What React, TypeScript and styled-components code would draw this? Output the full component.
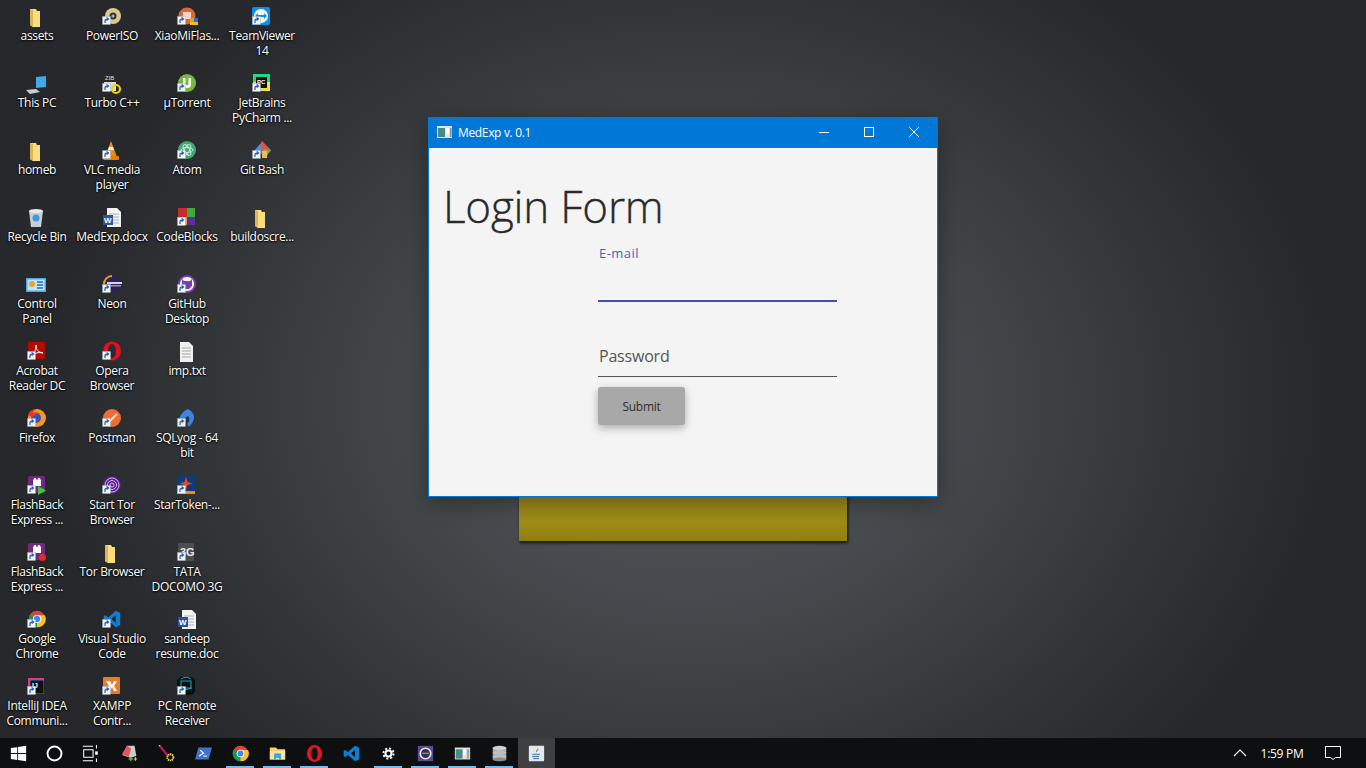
import React from "react";
import styled, { createGlobalStyle } from "styled-components";

const Global = createGlobalStyle`
  html, body { margin: 0; padding: 0; width: 1366px; height: 768px; overflow: hidden; background: #222; }
  * { box-sizing: border-box; }
`;

const FONT = `"Open Sans", "Noto Sans", sans-serif`;

const Screen = styled.div`
  width: 1366px; height: 768px; display: flex; flex-direction: column; overflow: hidden;
  font-family: ${FONT};
`;
const Desktop = styled.main`
  position: relative; flex: 1; min-height: 0; overflow: hidden;
  background: radial-gradient(ellipse 640px 520px at 690px 400px, #515659 0%, #484c50 35%, #36393c 70%, #26282c 100%), #222327;
`;
const IconGrid = styled.div`
  display: grid; grid-auto-flow: column; grid-template-rows: repeat(11, 67px); grid-auto-columns: 75px;
  margin-left: -0.5px;
`;
const Cell = styled.div`
  display: flex; flex-direction: column; align-items: center; padding-top: 6px; height: 67px;
`;
const IconBox = styled.div`
  position: relative; width: 26px; height: 22px; flex: none; margin-right: 2px;
  svg { display: block; width: 26px; height: 24px; }
`;
const Shortcut = styled.span`
  position: absolute; left: 4px; bottom: 3px; width: 9px; height: 9px; display: block;
  svg { width: 9px; height: 9px; }
`;
const Label = styled.div`
  width: 74px; color: #fff; font-size: 12px; line-height: 15px; text-align: center; letter-spacing: -0.32px;
  text-shadow: 0 1px 2px #000, 0 0 2px #000; white-space: pre-line;
`;
const BackWindow = styled.div`
  position: absolute; left: 519px; top: 420px; width: 328px; height: 121px;
  background: linear-gradient(180deg, #8f7f1b, #a08d17 85%, #8f7d10); box-shadow: 1px 2px 3px rgba(0,0,0,.75);
`;
const Win = styled.section`
  position: absolute; left: 428px; top: 117px; width: 510px; height: 380px; background: #f4f4f4;
  border: 1px solid #0078d7; display: flex; flex-direction: column;
  box-shadow: 0 6px 22px rgba(0,0,0,.35);
`;
const TitleBar = styled.header`
  height: 30px; flex: none; background: #0078d7; display: flex; align-items: center; color: #fff;
  padding: 0 1px 2px 8px;
`;
const TitleIcon = styled.svg` width: 15px; height: 12px; margin-right: 6px; flex: none; `;
const TitleText = styled.span` font-size: 12px; letter-spacing: -0.34px; flex: 1; `;
const Ctrl = styled.button`
  width: 45px; height: 28px; background: none; border: 0; padding: 0; display: flex; align-items: center; justify-content: center;
  svg { width: 10px; height: 10px; display: block; }
`;
const Content = styled.div`
  flex: 1; padding: 30px 14px 0; display: flex; flex-direction: column; color: #333;
`;
const Heading = styled.h1`
  margin: 0; font-size: 44px; line-height: 56px; font-weight: 300; letter-spacing: -0.2px; color: #2a2a2a;
  -webkit-text-stroke: 0.35px #2a2a2a;
`;
const Form = styled.form`
  margin: 8px 0 0 155px; width: 239px; display: flex; flex-direction: column;
`;
const Field = styled.div<{ $focused?: boolean; $h: number }>`
  height: ${p => p.$h}px; border-bottom: ${p => (p.$focused ? "2px solid #3f51b5" : "1px solid #555")};
`;
const FloatLabel = styled.div`
  padding-left: 1px; padding-top: 2px; font-size: 13px; line-height: 18px; color: #4a62b4; letter-spacing: 0.45px;
`;
const Placeholder = styled.div`
  padding-left: 1px; padding-top: 43px; font-size: 16px; line-height: 22px; color: #555; letter-spacing: -0.2px;
`;
const Submit = styled.button`
  margin-top: 10px; width: 87px; height: 38px; border: 0; border-radius: 3px; background: #a8a8a8; color: #2e2e2e;
  font: 12px ${FONT}; letter-spacing: -0.25px; box-shadow: 0 3px 8px rgba(0,0,0,.3); padding: 0;
`;
const Taskbar = styled.footer`
  height: 30px; flex: none; background: #0e0f10; display: flex; align-items: stretch;
`;
const Slot = styled.div<{ $open?: boolean; $active?: boolean; $w?: number; $pr?: number }>`
  position: relative; width: ${p => p.$w ?? 37}px; height: 30px; display: flex; align-items: center; justify-content: center;
  padding-right: ${p => p.$pr ?? 1}px;
  background: ${p => (p.$active ? "#3e4041" : "transparent")};
  svg { width: 17px; height: 17px; display: block; }
  &::after {
    content: ""; position: absolute; left: 4px; right: 5px; bottom: 0; height: 2px;
    background: ${p => (p.$open ? "#76b9ed" : "transparent")};
  }
`;
const Tray = styled.div`
  margin-left: auto; display: flex; align-items: center; color: #fff; padding-right: 13px;
`;
const TrayBtn = styled.div<{ $w: number }>`
  width: ${p => p.$w}px; height: 30px; display: flex; align-items: center; justify-content: center;
`;
const Clock = styled.span` width: 60px; text-align: center; font-size: 12px; letter-spacing: -0.3px; `;

const chromeShape = <><circle cx="12" cy="12" r="11" fill="#db4437"/><path d="M12 12L2.500 6.500A11 11 0 0 0 12 23z" fill="#0f9d58"/><path d="M12 12v11A11 11 0 0 0 22.500 7H12z" fill="#fbc02d"/><circle cx="12" cy="12" r="5.400" fill="#fff"/><circle cx="12" cy="12" r="4.200" fill="#4285f4"/></>;
const vsShape = <path d="M17 1l6 3v16l-6 3-10-9-4 3-2-1V8l2-1 4 3zM17 7l-6 5 6 5z" fill="#0e7fd0"/>;
const DESK_BOX = "-6.67 -1.33 34.67 32";

const folder = <svg viewBox="0 0 26 24"><path d="M7 3h6l1 2h3v16H10l-3-2z" fill="#fbdc7f"/><path d="M7 3l3 1v17l-3-2z" fill="#d9b65a"/></svg>;
const I: Record<string, React.ReactNode> = {
  folder,
  iso: <svg viewBox="0 0 26 24"><circle cx="15" cy="10" r="8" fill="#d9c98e"/><circle cx="15" cy="10" r="3.500" fill="#333"/><circle cx="15" cy="10" r="1.500" fill="#bbb"/></svg>,
  xiaomi: <svg viewBox="0 0 26 24"><circle cx="14" cy="10" r="8.500" fill="#d9683c"/><rect x="10" y="6" width="8" height="7" fill="#f4d6c8"/><rect x="17" y="12" width="4" height="4" fill="#e8a020"/><rect x="21" y="12" width="4" height="4" fill="#2a6cc8"/><rect x="17" y="16" width="8" height="3" fill="#e8c020"/></svg>,
  tv: <svg viewBox="0 0 26 24"><rect x="4" y="1" width="18" height="18" rx="2" fill="#0e8ee9"/><circle cx="13" cy="10" r="7" fill="#fff"/><path d="M7 10l3-3v2h6V7l3 3-3 3v-2h-6v2z" fill="#0e8ee9"/></svg>,
  pc: <svg viewBox="0 0 26 24"><path d="M13 4l10-1v11l-10 1z" fill="#3fa9ea"/><path d="M3 17l10-1 4 3-10 2z" fill="#c8ccd0"/></svg>,
  turbo: <svg viewBox="0 0 26 24"><rect x="6" y="1" width="12" height="7" fill="#2a2a2a"/><text x="7" y="7" fontSize="6" fill="#ddd" fontFamily="Liberation Sans">ZIB</text><rect x="6" y="9" width="12" height="9" fill="#ddd"/><circle cx="18" cy="16" r="4" fill="none" stroke="#f0d400" strokeWidth="2.200"/></svg>,
  ut: <svg viewBox="0 0 26 24"><circle cx="14" cy="10" r="9" fill="#76b83f"/><path d="M10 5v7q0 3 4 3t4-3V5h-2.500v7h-3V5z" fill="#fff"/></svg>,
  charm: <svg viewBox="0 0 26 24"><rect x="5" y="1" width="17" height="17" fill="#21d789"/><rect x="5" y="9" width="17" height="9" fill="#f0e040"/><rect x="8" y="4" width="11" height="11" fill="#111"/><text x="9" y="10.500" fontSize="6" fontWeight="700" fill="#fff" fontFamily="Liberation Sans">PC</text></svg>,
  vlc: <svg viewBox="0 0 26 24"><path d="M13 1l6 16H7z" fill="#f08a10"/><path d="M11 7h4l1 3h-6z" fill="#fff"/><rect x="5" y="16" width="16" height="4" rx="1" fill="#e87a00"/></svg>,
  atom: <svg viewBox="0 0 26 24"><circle cx="14" cy="10" r="9" fill="#3fa873"/><g fill="none" stroke="#cdeedd" strokeWidth=".9"><ellipse cx="14" cy="10" rx="6" ry="2.500"/><ellipse cx="14" cy="10" rx="6" ry="2.500" transform="rotate(60 14 10)"/><ellipse cx="14" cy="10" rx="6" ry="2.500" transform="rotate(120 14 10)"/></g></svg>,
  git: <svg viewBox="0 0 26 24"><path d="M14 1l9 9-5 6-6-3-2-5z" fill="#d8584a"/><path d="M16 9l7 1-6 8-3-5z" fill="#7cb04a"/><path d="M12 4L5 12h10z" fill="#4a90d8"/><rect x="14" y="11" width="5" height="7" fill="#e8c050"/></svg>,
  bin: <svg viewBox="0 0 26 24"><path d="M6 4h14l-2 16H8z" fill="#c9ced2"/><ellipse cx="13" cy="4" rx="7" ry="2" fill="#e6e8ea"/><circle cx="13" cy="11" r="3.500" fill="#3f9adf"/></svg>,
  word: <svg viewBox="0 0 26 24"><path d="M9 1h10l4 4v15H9z" fill="#f3f3f3"/><path d="M11 7h10M11 10h10M11 13h10M11 16h10" stroke="#a8b4c8"/><rect x="5" y="8" width="10" height="10" fill="#2b579a"/><text x="6" y="16" fontSize="8" fontWeight="700" fill="#fff" fontFamily="Liberation Sans">W</text></svg>,
  cb: <svg viewBox="0 0 26 24"><rect x="5" y="1" width="9" height="9" fill="#c22e2e"/><rect x="14" y="1" width="8" height="9" fill="#3fa83f"/><rect x="14" y="10" width="8" height="8" fill="#5a2ea8"/><rect x="5" y="10" width="9" height="8" fill="#e8a020"/></svg>,
  panel: <svg viewBox="0 0 26 24"><rect x="3" y="4" width="20" height="14" fill="#4aa9e8"/><rect x="4.500" y="5.500" width="17" height="11" fill="#bfe3fa"/><circle cx="9" cy="10" r="3" fill="#f0a030"/><path d="M14 8h6M14 11h6M14 14h6" stroke="#2a70b8" strokeWidth="1.400"/></svg>,
  neon: <svg viewBox="0 0 26 24"><circle cx="14" cy="10" r="9" fill="#2d2156"/><path d="M14 1a9 9 0 0 0-9 9h2a7 7 0 0 1 7-7z" fill="#f09a20"/><rect x="9" y="8" width="15" height="2" fill="#d8d4e8"/><rect x="11" y="11" width="12" height="1.500" fill="#9a90c8"/></svg>,
  ghd: <svg viewBox="0 0 26 24"><circle cx="14" cy="10" r="9" fill="#7d3fa8"/><circle cx="14" cy="10" r="7" fill="#fff"/><path d="M9 5l2 2h6l2-2v7l-3 3h-4l-3-3z" fill="#7d3fa8"/></svg>,
  acro: <svg viewBox="0 0 26 24"><rect x="5" y="1" width="17" height="17" rx="1" fill="#b30b00"/><path d="M8 15c4-3 5-7 5-11 0 5 2 7 7 8-5-1-8 0-12 3z" fill="none" stroke="#fff" strokeWidth="1"/></svg>,
  opera: <svg viewBox="0 0 26 24"><ellipse cx="14" cy="10" rx="9" ry="9.500" fill="#e01020"/><ellipse cx="14" cy="10" rx="4" ry="7" fill="#2a2b2f"/></svg>,
  txt: <svg viewBox="0 0 26 24"><path d="M7 1h9l4 4v16H7z" fill="#f0f0f0"/><path d="M9 7h9M9 10h9M9 13h9M9 16h9" stroke="#aaa"/></svg>,
  ff: <svg viewBox="0 0 26 24"><circle cx="14" cy="10" r="9" fill="#f59a20"/><circle cx="13" cy="10" r="5" fill="#3a4fb8"/><path d="M5 7q2-6 8-6-3 2-3 4 4-2 8 1-5-1-7 2-3 2-6-1z" fill="#e8362a"/></svg>,
  post: <svg viewBox="0 0 26 24"><circle cx="14" cy="10" r="9" fill="#ef6c35"/><path d="M11 14l8-8" stroke="#ffd8c4" strokeWidth="2"/></svg>,
  sql: <svg viewBox="0 0 26 24"><path d="M15 1c6 3 8 9 4 14l-3 4-2-3c3-3 3-6 1-8L6 14C6 8 10 3 15 1z" fill="#3a86e8"/></svg>,
  fbg: <svg viewBox="0 0 26 24"><rect x="5" y="1" width="17" height="17" rx="2" fill="#6f2a7f"/><rect x="10" y="5" width="8" height="6" fill="#fff"/><circle cx="12" cy="4.500" r="1.500" fill="#fff"/><circle cx="16" cy="4.500" r="1.500" fill="#fff"/><path d="M15 11l8 4.500-8 4.500z" fill="#3ec63e"/></svg>,
  fbr: <svg viewBox="0 0 26 24"><rect x="5" y="1" width="17" height="17" rx="2" fill="#6f2a7f"/><rect x="10" y="5" width="8" height="6" fill="#fff"/><circle cx="12" cy="4.500" r="1.500" fill="#fff"/><circle cx="16" cy="4.500" r="1.500" fill="#fff"/><circle cx="19.500" cy="15.500" r="3.500" fill="#e82828"/></svg>,
  tor: <svg viewBox="0 0 26 24"><circle cx="14" cy="10" r="9" fill="#59218c"/><g fill="none" stroke="#d8b8f0" strokeWidth="1"><circle cx="14" cy="10" r="2"/><circle cx="14" cy="10" r="4.500"/><circle cx="14" cy="10" r="7"/></g></svg>,
  star: <svg viewBox="0 0 26 24"><rect x="4" y="1" width="18" height="15" fill="#123a78"/><rect x="4" y="16" width="18" height="3" fill="#f08a10"/><path d="M13 2l1.500 5 5 1.500-5 1.500L13 15l-1.500-5-5-1.500 5-1.500z" fill="#e84a20"/></svg>,
  tata: <svg viewBox="0 0 26 24"><rect x="5" y="1" width="16" height="18" fill="#4b4e50"/><text x="7" y="14" fontSize="11" fontWeight="700" fill="#e8e8e8" fontFamily="Liberation Sans">3G</text></svg>,
  chrome: <svg viewBox={DESK_BOX}>{chromeShape}</svg>,
  vs: <svg viewBox={DESK_BOX}>{vsShape}</svg>,
  ij: <svg viewBox="0 0 26 24"><rect x="5" y="2" width="16" height="16" fill="#e8386a"/><rect x="7" y="4" width="14" height="14" fill="#3a78e8"/><rect x="7.500" y="4.500" width="13" height="13" fill="#111"/><text x="9" y="12" fontSize="7" fontWeight="700" fill="#fff" fontFamily="Liberation Sans">IJ</text></svg>,
  xampp: <svg viewBox="0 0 26 24"><rect x="5" y="1" width="17" height="17" rx="1" fill="#ea7a2c"/><path d="M8 5h4l2 4 2-4h3l-3 5 3 5h-3l-2-4-2 4H8l3-5z" fill="#fff"/></svg>,
  remote: <svg viewBox="0 0 26 24"><rect x="4" y="1" width="18" height="18" rx="5" fill="#051014"/><rect x="8" y="5" width="10" height="7" fill="none" stroke="#1fa5b8"/><path d="M7 15l12-3M8 3a9 9 0 0 1 10 0" stroke="#1fa5b8" fill="none"/></svg>,
};
const arrow = <svg viewBox="0 0 9 9"><rect x=".5" y=".5" width="8" height="8" fill="#f4f6f8" stroke="#9aa" strokeWidth=".4"/><path d="M3 7V5q0-2 2-2h1M4.600 1.500L6.500 3 4.600 4.500" fill="none" stroke="#2457c5" strokeWidth="1.200"/></svg>;

type Item = [string, string, boolean?];
const items: Item[] = [
  ["assets","folder"],["This PC","pc"],["homeb","folder"],["Recycle Bin","bin"],["Control\nPanel","panel"],["Acrobat\nReader DC","acro",true],["Firefox","ff",true],["FlashBack\nExpress ...","fbg",true],["FlashBack\nExpress ...","fbr",true],["Google\nChrome","chrome",true],["IntelliJ IDEA\nCommuni...","ij",true],
  ["PowerISO","iso",true],["Turbo C++","turbo",true],["VLC media\nplayer","vlc",true],["MedExp.docx","word"],["Neon","neon",true],["Opera\nBrowser","opera",true],["Postman","post",true],["Start Tor\nBrowser","tor",true],["Tor Browser","folder"],["Visual Studio\nCode","vs",true],["XAMPP\nContr...","xampp",true],
  ["XiaoMiFlas...","xiaomi",true],["µTorrent","ut",true],["Atom","atom",true],["CodeBlocks","cb",true],["GitHub\nDesktop","ghd",true],["imp.txt","txt"],["SQLyog - 64\nbit","sql",true],["StarToken-...","star",true],["TATA\nDOCOMO 3G","tata",true],["sandeep\nresume.doc","word"],["PC Remote\nReceiver","remote",true],
  ["TeamViewer\n14","tv",true],["JetBrains\nPyCharm ...","charm",true],["Git Bash","git",true],["buildoscre...","folder"],
];

type Task = { icon: React.ReactNode; open?: boolean; active?: boolean; w?: number; pr?: number };
const task: Task[] = [
  { w: 36, pr: 0, icon: <svg viewBox="0 0 20 20"><path d="M1 3.500l7.500-1v7H1zM9.500 2.400L19 1v8.500H9.500zM1 10.500h7.500v7l-7.500-1zM9.500 10.500H19V19l-9.500-1.400z" fill="#fff"/></svg> },
  { w: 36, pr: 0, icon: <svg viewBox="0 0 20 20"><circle cx="10" cy="10" r="8.200" fill="none" stroke="#fff" strokeWidth="2.200"/></svg> },
  { w: 39, pr: 3, icon: <svg viewBox="0 0 20 20"><path d="M1 1.500h12M1 18.500h12M2 5.500h11v9H2zM17 0v4M17 16v4" fill="none" stroke="#fff" strokeWidth="1.200"/><rect x="15.500" y="7.500" width="3" height="4" fill="#fff"/></svg> },
  { icon: <svg viewBox="0 0 20 20"><path d="M7 1h9l2 12-7 2-9-3z" fill="#c8ccd0"/><path d="M7 1L1 11l8 3 3-10z" fill="#e0585a"/><path d="M9 16.500h5M11.500 14v5" stroke="#4ec04e" strokeWidth="1.600"/><path d="M15 16.500h4M17 14.500v4" stroke="#e8d030" strokeWidth="1.400"/></svg> },
  { icon: <svg viewBox="0 0 20 20"><rect x="1" y="0" width="2" height="2" fill="#f0e030"/><path d="M2 1l10 12" stroke="#e8106a" strokeWidth="2.400"/><path d="M3 2l9 10" stroke="#2030c0" strokeWidth=".8"/><circle cx="14.500" cy="14.500" r="3.600" fill="none" stroke="#f0e030" strokeWidth="2.200" strokeDasharray="1.600 .7"/></svg> },
  { icon: <svg viewBox="0 0 20 20"><path d="M4 3h16l-4 14H0z" fill="#3f72c8"/><path d="M6 6l4 3.500-5 3.500" fill="none" stroke="#fff" strokeWidth="1.400"/><path d="M10 13h4" stroke="#fff" strokeWidth="1.200"/></svg> },
  { open: true, icon: <svg viewBox="0 0 24 24">{chromeShape}</svg> },
  { open: true, icon: <svg viewBox="0 0 20 20"><path d="M1 3h7l2 2h9v12H1z" fill="#f6d470"/><rect x="1" y="7" width="18" height="10" fill="#fbe39a"/><path d="M6 12h8v5h-2v-2H8v2H6z" fill="#2c9fdc"/><rect x="6" y="10" width="8" height="2" fill="#2c9fdc"/></svg> },
  { open: true, icon: <svg viewBox="0 0 20 20"><ellipse cx="10" cy="10" rx="9" ry="10" fill="#e01525"/><ellipse cx="10" cy="10" rx="3.800" ry="7.400" fill="#0e0f10"/></svg> },
  { icon: <svg viewBox="0 0 24 24">{vsShape}</svg> },
  { open: true, icon: <svg viewBox="0 0 20 20"><g fill="none" stroke="#fff"><circle cx="10" cy="10" r="3.600" strokeWidth="2.400"/><circle cx="10" cy="10" r="6" strokeWidth="2.200" strokeDasharray="2.400 2.300"/></g></svg> },
  { open: true, icon: <svg viewBox="0 0 20 20"><rect x="1" y="1" width="18" height="18" fill="#5a4a8f"/><circle cx="10" cy="10" r="6.200" fill="#33304a" stroke="#e8e8e8" strokeWidth="2"/><rect x="6" y="9" width="8" height="1.600" fill="#8a86a8"/></svg> },
  { open: true, icon: <svg viewBox="0 0 20 20"><rect x="1" y="3" width="18" height="14" fill="#dfe3e6"/><rect x="2" y="5" width="8" height="11" fill="#4a8a86"/><rect x="11" y="5" width="3" height="7" fill="#fff"/><rect x="15" y="5" width="3" height="11" fill="#9aa"/></svg> },
  { open: true, icon: <svg viewBox="0 0 20 20"><rect x="2" y="3" width="16" height="14" fill="#a9a9a9"/><ellipse cx="10" cy="3.500" rx="8" ry="2.600" fill="#d0d0d0"/><ellipse cx="10" cy="9" rx="8" ry="2.400" fill="#c0c0c0"/><ellipse cx="10" cy="13.500" rx="8" ry="2.400" fill="#bcbcbc"/><ellipse cx="10" cy="17" rx="8" ry="2.200" fill="#8a8a8a"/></svg> },
  { active: true, icon: <svg viewBox="0 0 20 20"><rect x="1" y="1" width="18" height="18" rx="1" fill="#dfe9f2"/><path d="M11 3c2 2-3 3-1 6 0-2 3-2 2-5z" fill="#e8701a"/><path d="M5 11h9M5 13.500h8M6 16h7" stroke="#3a6a9a" strokeWidth="1.100"/></svg> },
];

export default function App() {
  return (
    <Screen>
      <Global />
      <Desktop>
        <IconGrid>
          {items.map(([name, icon, sc], i) => (
            <Cell key={i}>
              <IconBox>
                {I[icon]}
                {sc && <Shortcut>{arrow}</Shortcut>}
              </IconBox>
              <Label>{name}</Label>
            </Cell>
          ))}
        </IconGrid>
        <BackWindow />
        <Win>
          <TitleBar>
            <TitleIcon viewBox="0 0 15 12"><rect width="15" height="12" fill="#dfe3e6"/><rect x="1" y="2" width="7" height="9" fill="#4a8a86"/><rect x="9" y="2" width="3" height="6" fill="#fff"/><rect x="13" y="2" width="1.500" height="9" fill="#889"/></TitleIcon>
            <TitleText>MedExp v. 0.1</TitleText>
            <Ctrl aria-label="Minimize"><svg viewBox="0 0 10 10"><path d="M0 5.500h10" stroke="#fff"/></svg></Ctrl>
            <Ctrl aria-label="Maximize"><svg viewBox="0 0 10 10"><rect x=".5" y=".5" width="9" height="9" fill="none" stroke="#fff"/></svg></Ctrl>
            <Ctrl aria-label="Close"><svg viewBox="0 0 10 10"><path d="M0 0l10 10M10 0L0 10" stroke="#fff"/></svg></Ctrl>
          </TitleBar>
          <Content>
            <Heading>Login Form</Heading>
            <Form>
              <Field $focused $h={60}><FloatLabel>E-mail</FloatLabel></Field>
              <Field $h={75}><Placeholder>Password</Placeholder></Field>
              <Submit type="button">Submit</Submit>
            </Form>
          </Content>
        </Win>
      </Desktop>
      <Taskbar>
        {task.map((t, i) => (
          <Slot key={i} $open={t.open} $active={t.active} $w={t.w} $pr={t.pr}>{t.icon}</Slot>
        ))}
        <Tray>
          <TrayBtn $w={24}><svg width="14" height="8" viewBox="0 0 14 8"><path d="M1 7l6-6 6 6" fill="none" stroke="#fff" strokeWidth="1.100"/></svg></TrayBtn>
          <Clock>1:59 PM</Clock>
          <TrayBtn $w={41}><svg width="16" height="16" viewBox="0 0 16 16"><path d="M.5 1.500h15v11h-5l-2.500 2-2.500-2h-5z" fill="none" stroke="#fff"/></svg></TrayBtn>
        </Tray>
      </Taskbar>
    </Screen>
  );
}
